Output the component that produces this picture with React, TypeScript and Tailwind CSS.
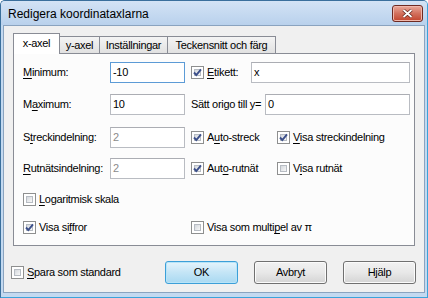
import type { ReactNode } from 'react';

function Check({ checked }: { checked?: boolean }) {
    return (
        <span className="relative w-[13px] h-[13px] shrink-0 border border-[#8e8f8f] bg-white p-[2px] flex">
            <span className="flex-1 border border-[#b7bcc3] bg-gradient-to-br from-[#d4d8dd] to-[#f8f8f8]" />
            {checked && (
                <svg className="absolute left-[0px] top-[0px]" width="11" height="11" viewBox="0 0 11 11">
                    <path d="M2 5.5 L4.3 8 L9 2.3" fill="none" stroke="#3c4f8a" strokeWidth="1.9" />
                </svg>
            )}
        </span>
    );
}

function CheckLabel({ checked, children }: { checked?: boolean; children: ReactNode }) {
    return (
        <div className="flex items-center gap-[3px]">
            <Check checked={checked} />
            <span className="leading-none">{children}</span>
        </div>
    );
}

function U({ children }: { children: ReactNode }) {
    return <span className="underline underline-offset-[2px]">{children}</span>;
}

function Field({ value, width, focused, disabled }: { value: string; width: string; focused?: boolean; disabled?: boolean }) {
    return (
        <div
            className={`${width} h-[21px] shrink-0 flex items-center pl-[2px] bg-white border ${
                focused ? 'border-[#5c9bd6]' : 'border-[#b9bcc2] border-t-[#abadb3]'
            } ${disabled ? 'text-[#8b8b8b]' : 'text-black'}`}
        >
            {value}
        </div>
    );
}

function Button({ children, primary }: { children: ReactNode; primary?: boolean }) {
    return (
        <button
            className={`w-[73px] h-[23px] rounded-[3px] border flex items-center justify-center ${
                primary
                    ? 'border-[#3c9fd8] bg-gradient-to-b from-[#e5f4fc] via-[#c4e5f6] to-[#a9d9f2] shadow-[inset_0_0_0_1px_#b8e4f8]'
                    : 'border-[#707070] bg-gradient-to-b from-[#f2f2f2] via-[#e8e8e8] to-[#d4d4d4] shadow-[inset_0_0_0_1px_#fbfbfb]'
            }`}
        >
            {children}
        </button>
    );
}

export default function App() {
    return (
        <div className="w-[428px] h-[298px] flex flex-col bg-[#c3d9f0] border border-[#3a6f9c] border-r-[#3aa3da] border-b-[#3aa3da] rounded-t-[5px] text-[11px] text-black tracking-[-0.3px] font-['Liberation_Sans',Arial,sans-serif] overflow-hidden">
            {/* title bar */}
            <div className="h-[24px] shrink-0 flex bg-gradient-to-b from-[#d3e3f5] to-[#b9d1ec]">
                <span className="pl-[7px] pt-[6px] text-[12px] tracking-normal leading-[14px]">Redigera koordinataxlarna</span>
                <div className="ml-auto mr-[4px] mt-[4px] w-[31px] h-[17px] rounded-[3px] border border-[#6e2a22] bg-gradient-to-b from-[#e9a99b] via-[#d2705d] to-[#c2432c] flex items-center justify-center shadow-[inset_0_0_0_1px_#f0b8ac]">
                    <svg width="11" height="9" viewBox="0 0 11 9">
                        <path d="M1.5 1 L9.5 8 M9.5 1 L1.5 8" stroke="#5a2019" strokeWidth="3.2" />
                        <path d="M1.5 1 L9.5 8 M9.5 1 L1.5 8" stroke="#ffffff" strokeWidth="1.8" />
                    </svg>
                </div>
            </div>

            {/* client area */}
            <div className="flex-1 mx-[2px] mb-[4px] border border-[#8aa3bf] bg-[#f0f0f0] flex flex-col">
                <div className="pl-[9px] pt-[7px]">
                    <div className="h-[20px] flex items-end">
                        <div className="relative z-10 w-[47px] h-[21px] mb-[-1px] border border-b-0 border-[#898c95] bg-white flex items-center justify-center pb-[1px]">
                            x-axel
                        </div>
                        <div className="w-[41px] h-[17px] -ml-px border border-b-0 border-[#898c95] bg-gradient-to-b from-[#f4f4f4] to-[#e1e1e1] flex items-center justify-center">
                            y-axel
                        </div>
                        <div className="w-[69px] h-[17px] -ml-px border border-b-0 border-[#898c95] bg-gradient-to-b from-[#f4f4f4] to-[#e1e1e1] flex items-center justify-center">
                            Inställningar
                        </div>
                        <div className="w-[109px] h-[17px] -ml-px border border-b-0 border-[#898c95] bg-gradient-to-b from-[#f4f4f4] to-[#e1e1e1] flex items-center justify-center">
                            Teckensnitt och färg
                        </div>
                    </div>

                    <div className="w-[402px] h-[193px] border border-[#898c95] bg-[#fcfcfc] pl-[9px] pr-[4px] pt-[8px] flex flex-col">
                        <div className="flex items-center h-[21px]">
                            <span className="w-[87px]"><U>M</U>inimum:</span>
                            <Field value="-10" width="w-[75px]" focused />
                            <div className="ml-[6px]">
                                <CheckLabel checked><U>E</U>tikett:</CheckLabel>
                            </div>
                            <div className="ml-auto">
                                <Field value="x" width="w-[159px]" />
                            </div>
                        </div>

                        <div className="flex items-center h-[21px] mt-[11px]">
                            <span className="w-[87px]">M<U>a</U>ximum:</span>
                            <Field value="10" width="w-[75px]" />
                            <span className="ml-[6px]">Sätt origo till y=</span>
                            <div className="ml-auto">
                                <Field value="0" width="w-[145px]" />
                            </div>
                        </div>

                        <div className="flex items-center h-[21px] mt-[12px]">
                            <span className="w-[87px]">S<U>t</U>reckindelning:</span>
                            <Field value="2" width="w-[75px]" disabled />
                            <div className="ml-[6px] w-[86px]">
                                <CheckLabel checked>A<U>u</U>to-streck</CheckLabel>
                            </div>
                            <CheckLabel checked><U>V</U>isa streckindelning</CheckLabel>
                        </div>

                        <div className="flex items-center h-[21px] mt-[10px]">
                            <span className="w-[87px]"><U>R</U>utnätsindelning:</span>
                            <Field value="2" width="w-[75px]" disabled />
                            <div className="ml-[6px] w-[86px]">
                                <CheckLabel checked>Aut<U>o</U>-rutnät</CheckLabel>
                            </div>
                            <CheckLabel>V<U>i</U>sa rutnät</CheckLabel>
                        </div>

                        <div className="flex items-center h-[17px] mt-[12px]">
                            <CheckLabel><U>L</U>ogaritmisk skala</CheckLabel>
                        </div>

                        <div className="flex items-center h-[17px] mt-[11px]">
                            <div className="w-[168px]">
                                <CheckLabel checked>Visa si<U>f</U>fror</CheckLabel>
                            </div>
                            <CheckLabel>Visa som multi<U>p</U>el av π</CheckLabel>
                        </div>
                    </div>
                </div>

                <div className="flex items-center h-[23px] mt-[15px] pl-[7px] pr-[8px]">
                    <CheckLabel><U>S</U>para som standard</CheckLabel>
                    <div className="ml-auto flex gap-[16px]">
                        <Button primary>OK</Button>
                        <Button>Avbryt</Button>
                        <Button>Hjälp</Button>
                    </div>
                </div>
            </div>
        </div>
    );
}
